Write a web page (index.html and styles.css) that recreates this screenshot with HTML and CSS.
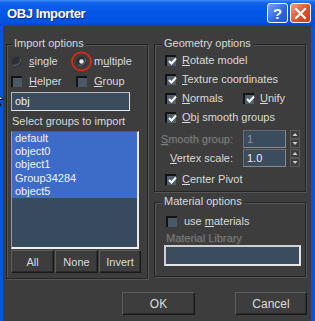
FILE: index.html
```html
<!DOCTYPE html>
<html>
<head>
<meta charset="utf-8">
<link rel="stylesheet" href="styles.css">
</head>
<body>
<div class="window">
  <div class="titlebar">
    <span class="title">OBJ Importer</span>
    <div class="tb-buttons">
      <span class="tb-btn help">?</span>
      <span class="tb-btn close"><svg width="13" height="13" viewBox="0 0 13 13"><path d="M2 2 L11 11 M11 2 L2 11" stroke="#fff" stroke-width="2.2" stroke-linecap="square"/></svg></span>
    </div>
  </div>
  <div class="frame">
    <div class="columns">
      <div class="group import">
        <div class="group-title">Import options</div>
        <div class="opt-grid">
          <div class="opt"><span class="radio"><svg width="11" height="11" viewBox="0 0 11 11"><circle cx="5.5" cy="5.5" r="5" fill="#2b3036"/><path d="M9 2.5 A5 5 0 0 1 2.5 9" stroke="#5d6670" stroke-width="1" fill="none"/></svg></span><span class="lbl"><u>s</u>ingle</span></div>
          <div class="opt"><span class="radio on"><svg width="11" height="11" viewBox="0 0 11 11"><circle cx="5.5" cy="5.5" r="5" fill="#2b3036"/><path d="M9 2.5 A5 5 0 0 1 2.5 9" stroke="#6d7680" stroke-width="1" fill="none"/><circle cx="5.5" cy="5.5" r="2.2" fill="#e8e8e8"/></svg><svg class="ring" width="24" height="22" viewBox="0 0 24 22"><ellipse cx="11.5" cy="10.5" rx="9.5" ry="9" fill="none" stroke="#d42a18" stroke-width="2"/></svg></span><span class="lbl">m<u>u</u>ltiple</span></div>
          <div class="opt"><span class="check"></span><span class="lbl"><u>H</u>elper</span></div>
          <div class="opt"><span class="check"></span><span class="lbl"><u>G</u>roup</span></div>
        </div>
        <div class="field obj">obj</div>
        <div class="caption">Select groups to import</div>
        <div class="listbox">
          <div class="item sel">default</div>
          <div class="item sel">object0</div>
          <div class="item sel">object1</div>
          <div class="item sel">Group34284</div>
          <div class="item sel">object5</div>
        </div>
        <div class="btn-row">
          <span class="btn">All</span>
          <span class="btn">None</span>
          <span class="btn">Invert</span>
        </div>
      </div>
      <div class="right-col">
        <div class="group geom">
          <div class="group-title">Geometry options</div>
          <div class="cb-list">
            <div class="cb-row"><div class="opt"><span class="check on"><svg width="9" height="9" viewBox="0 0 9 9"><path d="M1 4 L3.5 6.5 L8 1.5" stroke="#fff" stroke-width="2" fill="none"/></svg></span><span class="lbl"><u>R</u>otate model</span></div></div>
            <div class="cb-row"><div class="opt"><span class="check on"><svg width="9" height="9" viewBox="0 0 9 9"><path d="M1 4 L3.5 6.5 L8 1.5" stroke="#fff" stroke-width="2" fill="none"/></svg></span><span class="lbl"><u>T</u>exture coordinates</span></div></div>
            <div class="cb-row two"><div class="opt"><span class="check on"><svg width="9" height="9" viewBox="0 0 9 9"><path d="M1 4 L3.5 6.5 L8 1.5" stroke="#fff" stroke-width="2" fill="none"/></svg></span><span class="lbl"><u>N</u>ormals</span></div><div class="opt"><span class="check on"><svg width="9" height="9" viewBox="0 0 9 9"><path d="M1 4 L3.5 6.5 L8 1.5" stroke="#fff" stroke-width="2" fill="none"/></svg></span><span class="lbl"><u>U</u>nify</span></div></div>
            <div class="cb-row"><div class="opt"><span class="check on"><svg width="9" height="9" viewBox="0 0 9 9"><path d="M1 4 L3.5 6.5 L8 1.5" stroke="#fff" stroke-width="2" fill="none"/></svg></span><span class="lbl"><u>O</u>bj smooth groups</span></div></div>
          </div>
          <div class="spin-row first">
            <span class="spin-lbl dim"><u>S</u>mooth group:</span>
            <span class="field spin dimval">1</span>
            <span class="arrows"><svg width="10" height="18" viewBox="0 0 10 18"><rect x="0.5" y="0.5" width="9" height="8" fill="#3d3d3d" stroke="#5a5a5a"/><rect x="0.5" y="9.5" width="9" height="8" fill="#3d3d3d" stroke="#5a5a5a"/><path d="M2.5 6 L5 3 L7.5 6 Z" fill="#cfcfcf"/><path d="M2.5 12 L5 15 L7.5 12 Z" fill="#cfcfcf"/></svg></span>
          </div>
          <div class="spin-row">
            <span class="spin-lbl"><u>V</u>ertex scale:</span>
            <span class="field spin">1.0</span>
            <span class="arrows"><svg width="10" height="18" viewBox="0 0 10 18"><rect x="0.5" y="0.5" width="9" height="8" fill="#3d3d3d" stroke="#5a5a5a"/><rect x="0.5" y="9.5" width="9" height="8" fill="#3d3d3d" stroke="#5a5a5a"/><path d="M2.5 6 L5 3 L7.5 6 Z" fill="#cfcfcf"/><path d="M2.5 12 L5 15 L7.5 12 Z" fill="#cfcfcf"/></svg></span>
          </div>
          <div class="cb-row pivot"><div class="opt"><span class="check on"><svg width="9" height="9" viewBox="0 0 9 9"><path d="M1 4 L3.5 6.5 L8 1.5" stroke="#fff" stroke-width="2" fill="none"/></svg></span><span class="lbl"><u>C</u>enter Pivot</span></div></div>
        </div>
        <div class="group mat">
          <div class="group-title">Material options</div>
          <div class="cb-row mat-row"><div class="opt"><span class="check"></span><span class="lbl">use <u>m</u>aterials</span></div></div>
          <div class="lib-lbl dim">Material Library</div>
          <div class="field lib"></div>
        </div>
      </div>
    </div>
    <div class="footer">
      <span class="btn ok">OK</span>
      <span class="btn cancel">Cancel</span>
    </div>
  </div>
  <svg class="cursor" width="12" height="20" viewBox="0 0 12 20"><path d="M0.5 0.5 L0.5 16 L4 12.5 L6.5 18.5 L9 17.5 L6.5 11.5 L11 11.5 Z" fill="#fff" stroke="#000" stroke-width="1"/></svg>
</div>
</body>
</html>
```
FILE: styles.css
```css
* { box-sizing: border-box; }
body {
  margin: 0;
  background: #3d3d3d;
  font-family: "Liberation Sans", Arial, sans-serif;
  font-size: 11px;
  color: #dadada;
}
u { text-decoration-thickness: 1px; text-underline-offset: 1px; }
.window {
  position: relative;
  width: 315px;
  height: 321px;
  display: flex;
  flex-direction: column;
  overflow: hidden;
}
.titlebar {
  height: 26px;
  flex: none;
  display: flex;
  align-items: center;
  justify-content: space-between;
  padding: 0 4px 0 7px;
  background: linear-gradient(#3f8cf6 0, #0f62ec 3px, #0257e6 45%, #0153df 85%, #0248c8 100%);
}
.title {
  color: #fff;
  font-weight: bold;
  font-size: 13px;
  letter-spacing: -0.4px;
  text-shadow: 1px 1px 0 #0b2b86;
}
.tb-buttons { display: flex; gap: 2px; }
.tb-btn {
  width: 21px;
  height: 20px;
  border: 1px solid #fff;
  border-radius: 3px;
  display: flex;
  align-items: center;
  justify-content: center;
  color: #fff;
  font-weight: bold;
  font-size: 15px;
}
.help { background: linear-gradient(135deg, #7aa4f8, #2c62e6 60%, #2456d6); }
.close { background: linear-gradient(135deg, #f0a080, #e0502a 55%, #c63d18); }
.frame {
  flex: 1;
  border-left: 3px solid #0a53e0;
  border-right: 4px solid #0a53e0;
  background: #3d3d3d;
}
.columns {
  display: grid;
  grid-template-columns: 142px 152px;
  column-gap: 6px;
  align-items: start;
  padding: 18px 0 0 3px;
}
.group {
  border: 1px solid #242424;
  box-shadow: inset 1px 1px 0 #555, 1px 1px 0 #555;
  display: flex;
  flex-direction: column;
}
.group-title {
  align-self: flex-start;
  margin: -8px 0 0 6px;
  padding: 0 2px;
  height: 13px;
  line-height: 13px;
  background: #3d3d3d;
}
.import .group-title { margin-left: 5px; }
.geom .group-title, .mat .group-title { margin-left: 7px; }
.import { padding-bottom: 5px; }
.opt-grid {
  display: grid;
  grid-template-columns: 65px 1fr;
  grid-auto-rows: 20px;
  margin-top: 1px;
  padding-left: 4px;
}
.opt { display: flex; align-items: center; gap: 6px; }
.opt-grid .opt { gap: 7px; }
.radio { position: relative; width: 11px; height: 11px; display: block; }
.radio svg { display: block; }
.ring { position: absolute; left: -6px; top: -5px; }
.check {
  width: 11px;
  height: 11px;
  border-top: 2px solid #141414;
  border-left: 2px solid #141414;
  background: #4a5968;
  display: flex;
  align-items: center;
  justify-content: center;
  flex: none;
}
.check.on { background: #50606f; }
.check svg { display: block; margin: 0 -1px 0 0; }
.lbl { line-height: 13px; }
.field {
  background: #3b4c5e;
  border: 1px solid #b8b8b8;
  border-right-color: #e6e6e6;
  border-bottom-color: #e6e6e6;
  color: #eee;
}
.obj {
  margin: 1px 0 0 4px;
  width: 119px;
  height: 19px;
  line-height: 17px;
  padding-left: 3px;
}
.caption { height: 20px; line-height: 20px; padding-left: 5px; }
.listbox {
  margin-left: 4px;
  width: 128px;
  height: 118px;
  background: #374a5e;
  border-top: 1px solid #5a5a5a;
  border-left: 1px solid #9a9a9a;
  border-right: 2px solid #e8e8e8;
  border-bottom: 2px solid #f0f0f0;
  padding-top: 0;
}
.item {
  height: 13.2px;
  line-height: 13px;
  padding-left: 3px;
  color: #f2f2f2;
}
.item.sel { background: #3c6bc8; }
.btn-row {
  display: grid;
  grid-template-columns: 43px 43px 42px;
  column-gap: 1px;
  margin: 1px 0 0 4px;
  height: 23px;
}
.btn {
  border: 1px solid;
  border-color: #5c5c5c #1a1a1a #1a1a1a #5c5c5c;
  box-shadow: inset -1px -1px 0 #2b2b2b;
  display: flex;
  align-items: center;
  justify-content: center;
  color: #dcdcdc;
}
.right-col { display: flex; flex-direction: column; gap: 10px; }
.geom { padding-bottom: 2px; }
.cb-list { margin-top: 1px; }
.cb-row { height: 19px; display: flex; align-items: center; padding-left: 10px; }
.cb-row.two { display: grid; grid-template-columns: 78px 1fr; }
.spin-row {
  display: flex;
  align-items: center;
  justify-content: flex-end;
  height: 18px;
  margin-top: 1px;
  padding-right: 5px;
}
.spin-row.first { margin-top: 3px; }
.spin-lbl { margin-right: 10px; }
.dim { color: #7d7d7d; text-shadow: 1px 1px 0 #4c4c4c; }
.spin {
  width: 43px;
  height: 18px;
  line-height: 16px;
  padding-left: 3px;
  border-color: #6c6c6c;
  border-right-color: #8a8a8a;
  border-bottom-color: #8a8a8a;
}
.dimval { color: #8a96a4; }
.arrows { margin-left: 4px; display: block; height: 18px; }
.arrows svg { display: block; }
.pivot { margin-top: 3px; }
.mat { padding-bottom: 10px; }
.mat-row { height: 20px; margin-top: 3px; padding-left: 11px; }
.mat-row .opt { gap: 7px; }
.lib-lbl { height: 14px; line-height: 14px; padding-left: 11px; }
.lib {
  margin-left: 9px;
  width: 137px;
  height: 21px;
  border: 2px solid #e6e6e6;
  border-top-color: #cfcfcf;
  border-left-color: #cfcfcf;
}
.footer {
  display: flex;
  justify-content: flex-end;
  gap: 40px;
  margin-top: 13px;
  padding-right: 4px;
}
.footer .btn { height: 23px; font-size: 12px; }
.ok { width: 73px; }
.cancel { width: 72px; }
.cursor { position: absolute; left: -8px; top: 88px; }
```
